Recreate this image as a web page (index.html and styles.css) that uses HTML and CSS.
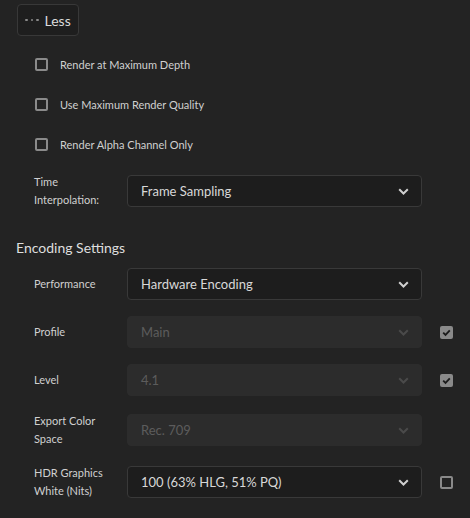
FILE: index.html
```html
<!DOCTYPE html>
<html lang="en">
<head>
  <meta charset="UTF-8">
  <link rel="stylesheet" href="styles.css">
  <title>Export Settings</title>
</head>
<body>
  <div class="panel">
    <!-- 더보기 버튼 -->
    <button class="less-btn"><span class="dots"><i></i><i></i><i></i></span>Less</button>

    <div class="check-row"><span class="box"></span><span>Render at Maximum Depth</span></div>
    <div class="check-row"><span class="box"></span><span>Use Maximum Render Quality</span></div>
    <div class="check-row"><span class="box"></span><span>Render Alpha Channel Only</span></div>

    <div class="field first">
      <div class="label">Time<br>Interpolation:</div>
      <div class="select"><span>Frame Sampling</span><svg class="chev" width="11" height="7" viewBox="0 0 11 7"><path d="M1.2 1.2 L5.5 5.5 L9.8 1.2"/></svg></div>
    </div>

    <h2 class="heading">Encoding Settings</h2>

    <div class="fields">
      <div class="field">
        <div class="label">Performance</div>
        <div class="select"><span>Hardware Encoding</span><svg class="chev" width="11" height="7" viewBox="0 0 11 7"><path d="M1.2 1.2 L5.5 5.5 L9.8 1.2"/></svg></div>
      </div>
      <div class="field">
        <div class="label">Profile</div>
        <div class="select disabled"><span>Main</span><svg class="chev" width="11" height="7" viewBox="0 0 11 7"><path d="M1.2 1.2 L5.5 5.5 L9.8 1.2"/></svg></div>
        <span class="box checked"><svg width="13" height="13" viewBox="0 0 13 13"><path d="M3.2 6.6 L5.5 8.9 L9.8 4.3"/></svg></span>
      </div>
      <div class="field">
        <div class="label">Level</div>
        <div class="select disabled"><span>4.1</span><svg class="chev" width="11" height="7" viewBox="0 0 11 7"><path d="M1.2 1.2 L5.5 5.5 L9.8 1.2"/></svg></div>
        <span class="box checked"><svg width="13" height="13" viewBox="0 0 13 13"><path d="M3.2 6.6 L5.5 8.9 L9.8 4.3"/></svg></span>
      </div>
      <div class="field">
        <div class="label">Export Color<br>Space</div>
        <div class="select disabled"><span>Rec. 709</span><svg class="chev" width="11" height="7" viewBox="0 0 11 7"><path d="M1.2 1.2 L5.5 5.5 L9.8 1.2"/></svg></div>
      </div>
      <div class="field">
        <div class="label">HDR Graphics<br>White (Nits)</div>
        <div class="select"><span>100 (63% HLG, 51% PQ)</span><svg class="chev" width="11" height="7" viewBox="0 0 11 7"><path d="M1.2 1.2 L5.5 5.5 L9.8 1.2"/></svg></div>
        <span class="box"></span>
      </div>
    </div>
  </div>
</body>
</html>
```

FILE: styles.css
```css
body {
  margin: 0;
  background: #232323;
  font-family: Lato, "Noto Sans", sans-serif;
  color: #d4d4d4;
}

.panel {
  padding: 4px 0 0 16px;
}

.less-btn {
  display: flex;
  align-items: center;
  height: 32px;
  margin-left: 1px;
  padding: 0 7px 0 7px;
  background: #1e1e1e;
  border: 1px solid #383838;
  border-radius: 4px;
  color: #dcdcdc;
  font-family: inherit;
  font-size: 14px;
}

.dots {
  display: flex;
  gap: 3px;
  margin-right: 6px;
}

.dots i {
  width: 2.5px;
  height: 2.5px;
  border-radius: 50%;
  background: #8a8a8a;
}

.check-row {
  display: flex;
  align-items: center;
  height: 40px;
  padding-left: 19px;
  font-size: 11px;
  color: #d0d0d0;
}

.check-row:first-of-type {
  margin-top: 8px;
}

.box {
  box-sizing: border-box;
  width: 13px;
  height: 13px;
  border: 2px solid #8a8a8a;
  border-radius: 2px;
  margin-right: 12px;
  flex: none;
}

.box.checked {
  background: #8a8a8a;
  border: none;
}

.box svg {
  display: block;
}

.box svg path {
  fill: none;
  stroke: #1c1c1c;
  stroke-width: 1.8;
}

.field {
  display: grid;
  grid-template-columns: 93px 295px 13px;
  align-items: center;
  padding-left: 18px;
  min-height: 32px;
}

.field.first {
  margin-top: 9px;
}

.field .box {
  margin: 0 0 0 18px;
}

.label {
  font-size: 11px;
  line-height: 18px;
  color: #d0d0d0;
}

.select {
  box-sizing: border-box;
  display: flex;
  align-items: center;
  justify-content: space-between;
  height: 32px;
  padding: 0 12px 0 13px;
  background: #1d1d1d;
  border: 1px solid #393939;
  border-radius: 4px;
  font-size: 13px;
  color: #d8d8d8;
}

.select.disabled {
  background: #2c2c2c;
  border-color: #2c2c2c;
  color: #5c5c5c;
}

.chev path {
  fill: none;
  stroke: #cfcfcf;
  stroke-width: 2;
}

.select.disabled .chev path {
  stroke: #4a4a4a;
}

.heading {
  margin: 29px 0 10px 0;
  font-size: 14px;
  line-height: 20px;
  font-weight: normal;
  color: #dedede;
}

.fields {
  display: flex;
  flex-direction: column;
  gap: 16px;
}
```
